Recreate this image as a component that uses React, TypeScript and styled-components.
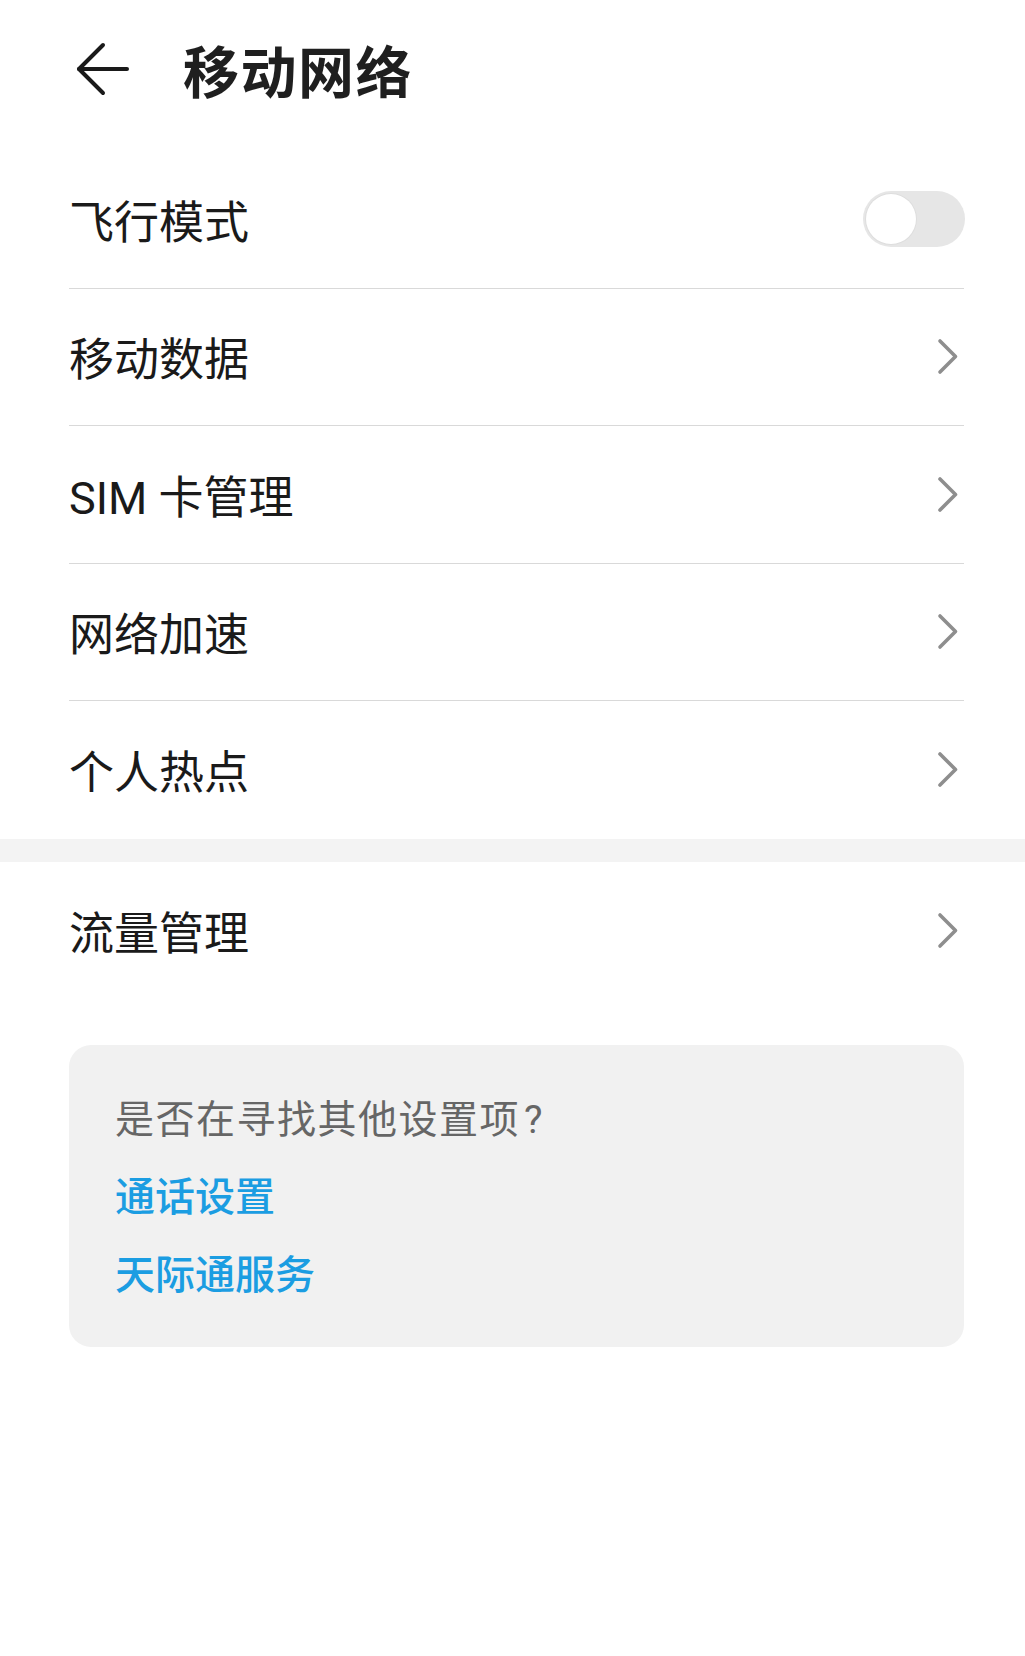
import React, {useState} from 'react';
import styled, {createGlobalStyle} from 'styled-components';

const GlobalStyle = createGlobalStyle`
  html, body {
    margin: 0;
    padding: 0;
    background: #ffffff;
  }
  body {
    font-family: Roboto, "Noto Sans CJK SC", "Noto Sans", sans-serif;
    color: #1a1a1a;
  }
`;

type Item = {label: string; kind: 'switch' | 'link'};

const mainItems: Item[] = [
    {label: '飞行模式', kind: 'switch'},
    {label: '移动数据', kind: 'link'},
    {label: 'SIM 卡管理', kind: 'link'},
    {label: '网络加速', kind: 'link'},
    {label: '个人热点', kind: 'link'},
];

const BackArrow = () => (
    <svg width="54" height="54" viewBox="0 0 54 54" fill="none">
        <path d="M4 27H52" stroke="#1a1a1a" strokeWidth="4" strokeLinecap="round"/>
        <path d="M28 3L4 27L28 51" stroke="#1a1a1a" strokeWidth="4" strokeLinecap="round" strokeLinejoin="round"/>
    </svg>
);

const Chevron = () => (
    <svg width="22" height="37" viewBox="0 0 22 37" fill="none">
        <path d="M3 3L18.5 18.5L3 34" stroke="#8e8e8e" strokeWidth="3.6" strokeLinecap="round" strokeLinejoin="round"/>
    </svg>
);

export default function App() {
    const [airplane, setAirplane] = useState(false);

    return (
        <S.Page>
            <GlobalStyle/>
            <S.Header>
                <S.BackButton aria-label="返回"><BackArrow/></S.BackButton>
                <S.Title>移动网络</S.Title>
            </S.Header>

            <S.List>
                {mainItems.map((item, i) =>
                    <S.Row key={item.label} $last={i === mainItems.length - 1}>
                        <S.Label>{item.label}</S.Label>
                        {item.kind === 'switch'
                            ? <S.Switch $on={airplane} onClick={() => setAirplane(!airplane)}><S.Knob $on={airplane}/></S.Switch>
                            : <Chevron/>}
                    </S.Row>)}
            </S.List>

            <S.Band/>

            <S.List>
                <S.Row $last>
                    <S.Label>流量管理</S.Label>
                    <Chevron/>
                </S.Row>
            </S.List>

            <S.Card>
                <S.Hint>是否在寻找其他设置项<S.Question>?</S.Question></S.Hint>
                <S.CardLink>通话设置</S.CardLink>
                <S.CardLink>天际通服务</S.CardLink>
            </S.Card>
        </S.Page>
    );
}

const S = {
    Page: styled.main`
      width: 1025px;
      min-height: 1656px;
      background: #ffffff;
      display: flex;
      flex-direction: column;
    `,
    Header: styled.header`
      height: 151px;
      box-sizing: border-box;
      padding: 0 0 14px 75px;
      display: flex;
      align-items: center;
      gap: 54px;
    `,
    BackButton: styled.button`
      border: none;
      background: none;
      padding: 0;
      width: 54px;
      height: 54px;
      display: flex;
    `,
    Title: styled.h1`
      margin: 0;
      font-size: 56px;
      font-weight: 700;
      color: #1f1f1f;
      font-family: "Noto Sans CJK SC", sans-serif;
      letter-spacing: 1.5px;
    `,
    List: styled.section`
      margin-left: 69px;
      width: 895px;
      display: flex;
      flex-direction: column;
    `,
    Row: styled.div<{ $last?: boolean }>`
      height: 137.5px;
      box-sizing: border-box;
      display: flex;
      align-items: center;
      justify-content: space-between;
      padding-right: 5px;
      border-bottom: ${p => p.$last ? 'none' : '1.5px solid #d9d9d9'};
    `,
    Label: styled.span`
      font-size: 45px;
      font-weight: 400;
      color: #1a1a1a;
    `,
    Switch: styled.div<{ $on: boolean }>`
      width: 102px;
      height: 56px;
      border-radius: 28px;
      background: ${p => p.$on ? '#1b9de2' : '#e6e6e6'};
      margin-right: -6px;
      padding: 3px;
      box-sizing: border-box;
      display: flex;
      justify-content: ${p => p.$on ? 'flex-end' : 'flex-start'};
      cursor: pointer;
    `,
    Knob: styled.div<{ $on: boolean }>`
      width: 50px;
      height: 50px;
      border-radius: 50%;
      background: #ffffff;
      box-shadow: 0 0 0 1px #dedede;
    `,
    Band: styled.div`
      height: 23px;
      background: #f3f3f3;
    `,
    Card: styled.div`
      margin: 46px 0 0 69px;
      width: 895px;
      height: 302px;
      box-sizing: border-box;
      padding: 47px 43px 0 46px;
      background: #f1f1f1;
      border-radius: 22px;
      display: flex;
      flex-direction: column;
      gap: 22px;
    `,
    Hint: styled.div`
      font-size: 39px;
      line-height: 56px;
      letter-spacing: 1.5px;
      color: #666666;
    `,
    Question: styled.span`
      margin-left: 4px;
    `,
    CardLink: styled.a`
      font-size: 40px;
      line-height: 56px;
      font-weight: 500;
      color: #1b9de2;
      text-decoration: none;
      cursor: pointer;
    `,
};
